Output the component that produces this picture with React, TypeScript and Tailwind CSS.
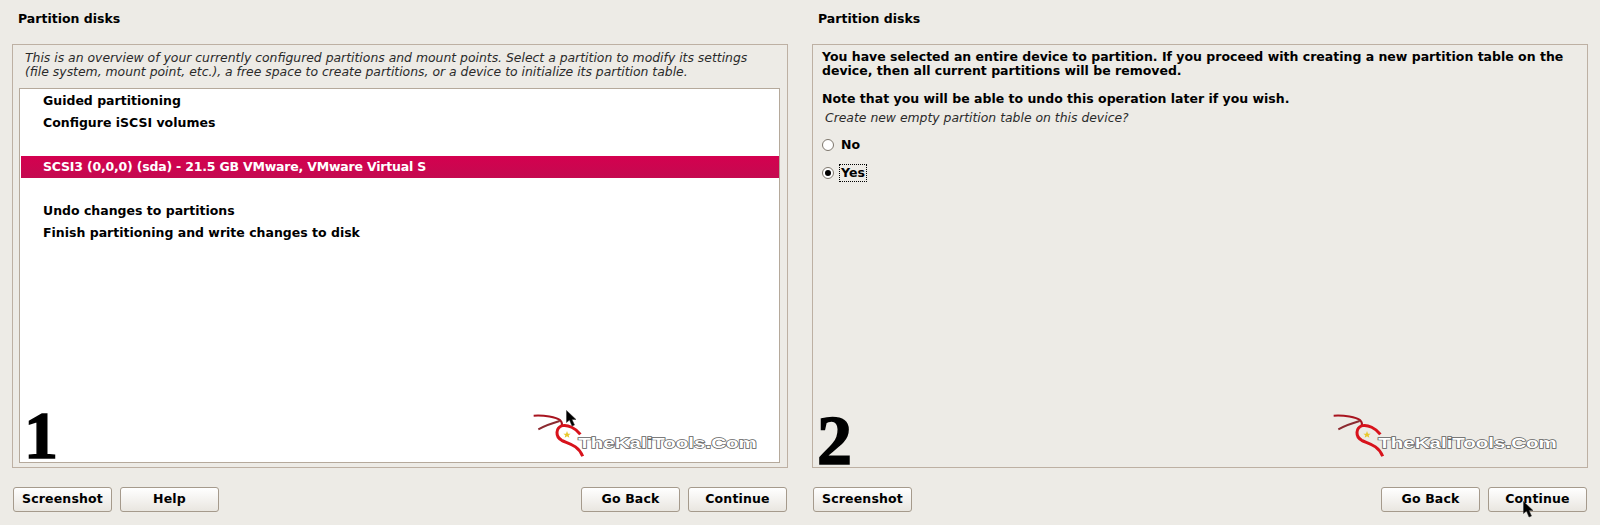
import React from 'react'

const font = "font-['DejaVu_Sans',sans-serif]"

function Logo() {
  return (
    <svg className="absolute right-[26px] bottom-[5px]" width="230" height="52" viewBox="30 45 690 156" fill="none">
      <path d="M38 62 C70 60 105 66 118 76 C124 82 124 88 122 94" stroke="#a8141f" strokeWidth="6" />
      <path d="M52 103 C72 92 95 84 116 78" stroke="#8c2a30" strokeWidth="6" />
      <path d="M178 118 C165 100 140 88 124 92 C104 98 102 124 122 136 C142 146 172 150 185 184" stroke="#d8131c" strokeWidth="9" />
      <polygon points="138,108 141,116 149,116 143,121 145,128 138,124 131,128 133,121 127,116 135,116" fill="#e8c82c" />
      <text x="172" y="158" textLength="535" lengthAdjust="spacingAndGlyphs" fontFamily="'Liberation Sans', sans-serif" fontWeight="700" fontSize="46" fill="#ffffff" stroke="#5e5e5e" strokeWidth="4" paintOrder="stroke">
        TheKaliTools.Com
      </text>
    </svg>
  )
}

function Cursor({ className }: { className: string }) {
  return (
    <svg className={className} width="11" height="17" viewBox="0 0 11 17">
      <path d="M0.5 0.5 L0.5 12.5 L3.5 10 L6 16 L8.5 15 L6 9.5 L10 9.5 Z" fill="#000" stroke="#333" strokeWidth="0.5" />
    </svg>
  )
}

function Button({ label }: { label: string }) {
  return (
    <div className="flex h-[25px] w-[99px] items-center justify-center rounded-[3px] border border-[#a59a8c] bg-gradient-to-b from-white to-[#e9e6e0] text-[12.5px] font-bold tracking-[0.15px] text-black">
      {label}
    </div>
  )
}

function Row({ label, selected }: { label?: string; selected?: boolean }) {
  return (
    <div className={`h-[22px] text-[12.5px] leading-[22px] font-bold ${selected ? 'ml-[1px] bg-gradient-to-b from-[#d4004f] to-[#c40a50] pl-[22px] tracking-[-0.2px] text-white' : 'pl-[23px] text-black'}`}>
      {label}
    </div>
  )
}

function Radio({ label, checked }: { label: string; checked?: boolean }) {
  return (
    <div className="flex h-[28px] items-center pl-[3px]">
      <div className="flex h-[12px] w-[12px] items-center justify-center rounded-full border border-[#7d766c] bg-white">
        {checked && <div className="h-[6px] w-[6px] rounded-full bg-black" />}
      </div>
      <div className={`ml-[6px] px-[1px] text-[12.5px] leading-[16px] font-bold text-black ${checked ? 'outline-1 outline-black outline-dotted' : ''}`}>
        {label}
      </div>
    </div>
  )
}

function LeftPane() {
  return (
    <div className="flex h-[525px] w-[800px] flex-col pl-[12px]">
      <div className="h-[44px] pt-[10px] pl-[6px] text-[12.5px] leading-[17px] font-bold text-black">Partition disks</div>
      <div className="relative h-[424px] w-[776px] border border-[#bdb0a3] pr-[7px] pl-[6px]">
        <p className="pt-[6px] pl-[6px] text-[12.4px] leading-[14px] text-[#2a2a2a] italic">
          This is an overview of your currently configured partitions and mount points. Select a partition to modify its settings<br />
          (file system, mount point, etc.), a free space to create partitions, or a device to initialize its partition table.
        </p>
        <div className="mt-[9px] h-[375px] border border-[#b5a99b] bg-white pt-[1px]">
          <Row label="Guided partitioning" />
          <Row label="Configure iSCSI volumes" />
          <Row />
          <Row label="SCSI3 (0,0,0) (sda) - 21.5 GB VMware, VMware Virtual S" selected />
          <Row />
          <Row label="Undo changes to partitions" />
          <Row label="Finish partitioning and write changes to disk" />
        </div>
        <div className="absolute bottom-[-2px] left-[11px] font-['Liberation_Serif',serif] text-[68px] leading-[68px] font-bold text-black [-webkit-text-stroke:1.5px_black]">1</div>
        <Logo />
        <Cursor className="absolute top-[365px] left-[553px]" />
      </div>
      <div className="mt-[19px] flex w-[775px] pl-[1px]">
        <div className="flex gap-[8px]">
          <Button label="Screenshot" />
          <Button label="Help" />
        </div>
        <div className="ml-auto flex gap-[8px]">
          <Button label="Go Back" />
          <Button label="Continue" />
        </div>
      </div>
    </div>
  )
}

function RightPane() {
  return (
    <div className="flex h-[525px] w-[800px] flex-col pl-[12px]">
      <div className="h-[44px] pt-[10px] pl-[6px] text-[12.5px] leading-[17px] font-bold text-black">Partition disks</div>
      <div className="relative h-[424px] w-[776px] border border-[#bdb0a3] pt-[5px] pl-[9px]">
        <p className="text-[12.5px] leading-[14px] font-bold text-black">
          You have selected an entire device to partition. If you proceed with creating a new partition table on the<br />
          device, then all current partitions will be removed.
        </p>
        <p className="mt-[14px] text-[12.5px] leading-[14px] font-bold text-black">Note that you will be able to undo this operation later if you wish.</p>
        <p className="mt-[5px] pl-[3px] text-[12.4px] leading-[14px] text-[#2a2a2a] italic">Create new empty partition table on this device?</p>
        <div className="mt-[6px] -ml-[3px]">
          <Radio label="No" />
          <Radio label="Yes" checked />
        </div>
        <div className="absolute bottom-[-9px] left-[4px] font-['Liberation_Serif',serif] text-[70px] leading-[70px] font-bold text-black [-webkit-text-stroke:1.5px_black]">2</div>
        <Logo />
      </div>
      <div className="mt-[19px] flex w-[775px] pl-[1px]">
        <Button label="Screenshot" />
        <div className="ml-auto flex gap-[8px]">
          <Button label="Go Back" />
          <Button label="Continue" />
        </div>
      </div>
    </div>
  )
}

export default function App() {
  return (
    <div className={`relative flex h-[525px] w-[1600px] overflow-hidden bg-[#edebe6] ${font}`}>
      <LeftPane />
      <RightPane />
      <Cursor className="absolute top-[501px] left-[1523px]" />
    </div>
  )
}
